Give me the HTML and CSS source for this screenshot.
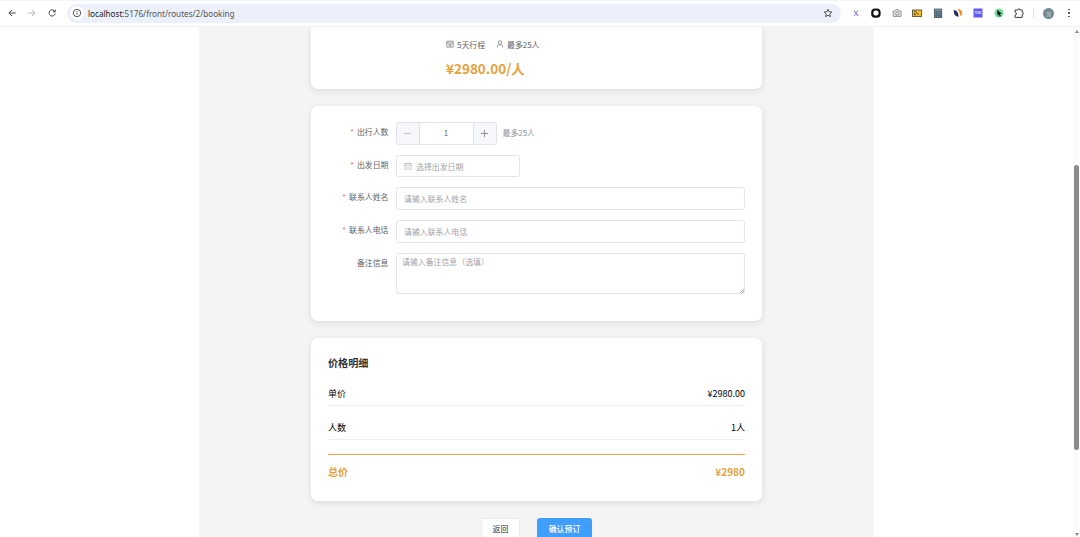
FILE: index.html
```html
<!DOCTYPE html>
<html lang="zh-CN">
<head>
<meta charset="UTF-8" />
<meta name="viewport" content="width=device-width, initial-scale=1" />
<title>预订</title>
<link rel="stylesheet" href="styles.css">
</head>
<body>

<header class="toolbar">
  <div class="nav">
    <svg class="nav-icon" viewBox="0 0 10 10"><path d="M8.7 5H2M4.9 2L1.9 5l3 3" /></svg>
    <svg class="nav-icon off" viewBox="0 0 10 10"><path d="M1.3 5H8M5.1 2l3 3-3 3" /></svg>
    <svg class="nav-icon" viewBox="0 0 10 10"><path d="M8 3.7A3.1 3.1 0 1 0 8.2 5.6M8.2 1.6v2.3H5.9" /></svg>
  </div>
  <div class="address">
    <span class="site-info">
      <svg viewBox="0 0 10 10"><circle cx="5" cy="5" r="3.7" /><path d="M5 4.6v2.2M5 2.9v.9" /></svg>
    </span>
    <span class="url"><b>localhost:</b>5176/front/routes/2/booking</span>
    <svg class="star" viewBox="0 0 10 10"><path d="M5 1.2l1.1 2.6 2.8.2-2.1 1.9.6 2.8L5 7.2 2.6 8.7l.6-2.8L1.1 4l2.8-.2z" /></svg>
  </div>
  <div class="extensions">
    <svg viewBox="0 0 12 12"><path d="M4 3.5l4 5.5" stroke="#8a7be0" stroke-width="1.1" /><path d="M8 3.5L4 9" stroke="#72a9ef" stroke-width="1.1" /><path d="M6.5 7L8 9" stroke="#e06bc0" stroke-width="1.1" /></svg>
    <svg viewBox="0 0 12 12"><rect x="1.2" y="1.4" width="9.4" height="9.4" rx="3.8" fill="#111" /><rect x="3.4" y="3.5" width="5.1" height="5.1" rx="2" fill="#fff" /></svg>
    <svg viewBox="0 0 12 12"><path d="M2.2 4h1.9l.8-1.2h2.4L8.1 4H10v5.4H2.2z" fill="#e6e6e6" stroke="#888" stroke-width=".9" /><circle cx="6.1" cy="6.6" r="1.5" fill="#fff" stroke="#777" stroke-width=".9" /></svg>
    <svg viewBox="0 0 12 12"><rect x="1.5" y="3" width="9.2" height="6.5" fill="#edbb32" stroke="#4d4328" stroke-width=".8" /><path d="M3.2 4.6h1.4l2.8 3.2M3.4 6v1.7H5" fill="none" stroke="#46391c" stroke-width=".9" /></svg>
    <svg viewBox="0 0 12 12"><rect x="2" y="1.6" width="8.1" height="9.4" fill="#4c6372" /><rect x="3" y="2.5" width="6" height="1.6" fill="#82959f" /><path d="M3 5.5h6M3 7.3h6M3 9.2h6" stroke="#81aeba" stroke-width=".8" stroke-dasharray="1 .8" /></svg>
    <svg viewBox="0 0 12 12"><path d="M1.7 3Q6.3 3.2 6.6 9.8 1.7 9.8 1.7 3z" fill="#202a62" /><path d="M5 2Q10.2 2 10.2 6.2 10 8.8 7.8 9 8.4 4.8 5 2z" fill="#f5901e" /></svg>
    <svg viewBox="0 0 12 12"><rect x="1.5" y="1.5" width="9" height="9" rx=".5" fill="#6258f5" /><text class="badge-text" x="6" y="7.2" text-anchor="middle">TEXC</text></svg>
    <svg viewBox="0 0 12 12"><circle cx="6" cy="6" r="4.5" fill="#72dc98" /><path d="M4.2 2.8l4.6 4-1.9.3 1 2-1.2.6-.9-2.1-1.3 1.2z" fill="#111" /></svg>
    <svg viewBox="0 0 12 12"><path d="M2 3h2.9q0-1.2 1.1-1.2T7.1 3h2.1v2.3q1.2 0 1.2 1.1T9.2 7.5v2.9H2V8.1q1.5 0 1.5-1.4T2 5.3z" fill="none" stroke="#3c3c3c" stroke-width="1" stroke-linejoin="round" /></svg>
  </div>
  <div class="profile">
    <span class="divider"></span>
    <span class="avatar">测</span>
    <span class="more"><i></i><i></i><i></i></span>
  </div>
</header>

<div class="viewport">
  <main class="page">
    <section class="card route">
      <div class="route-meta">
        <svg viewBox="0 0 10 10"><path d="M1 1.5h8v7.4H1zM1 3.7h8M3 5.5h4M3 7.2h4" /></svg>
        <span>5天行程</span>
        <svg class="user" viewBox="0 0 10 10"><circle cx="5" cy="3" r="2.1" /><path d="M1.7 9.4V8q0-2 2-2h2.6q2 0 2 2v1.4" /></svg>
        <span>最多25人</span>
      </div>
      <div class="route-price">¥2980.00/人</div>
    </section>

    <section class="card form">
      <div class="row">
        <label class="label required">出行人数</label>
        <div class="number">
          <button class="step minus"></button>
          <span class="count">1</span>
          <button class="step plus"></button>
        </div>
        <span class="tip">最多25人</span>
      </div>
      <div class="row">
        <label class="label required">出发日期</label>
        <div class="field date">
          <svg viewBox="0 0 10 10"><path d="M1 1.8h8v7.2H1zM1 4.2h8M3.1 .8v2M6.9 .8v2M3 6.5h4" /></svg>
          <span>选择出发日期</span>
        </div>
      </div>
      <div class="row">
        <label class="label required">联系人姓名</label>
        <input class="field" type="text" placeholder="请输入联系人姓名" />
      </div>
      <div class="row">
        <label class="label required">联系人电话</label>
        <input class="field" type="text" placeholder="请输入联系人电话" />
      </div>
      <div class="row">
        <label class="label">备注信息</label>
        <div class="remark-box">
          <textarea class="field remark" placeholder="请输入备注信息（选填）"></textarea>
          <svg class="grip" viewBox="0 0 5 5"><path d="M0 5l5-5M2.5 5L5 2.5" /></svg>
        </div>
      </div>
    </section>

    <section class="card prices">
      <h3>价格明细</h3>
      <div class="price-item"><span>单价</span><span>¥2980.00</span></div>
      <div class="price-item"><span>人数</span><span>1人</span></div>
      <div class="price-total"><span>总价</span><span>¥2980</span></div>
    </section>

    <div class="actions">
      <button class="btn">返回</button>
      <button class="btn primary">确认预订</button>
    </div>
  </main>
  <div class="scrollbar">
    <span class="arrow up"></span>
    <span class="thumb"></span>
    <span class="arrow down"></span>
  </div>
</div>

</body>
</html>
```
FILE: styles.css
```css
* {
  box-sizing: border-box;
}
body {
  margin: 0;
  height: 537px;
  overflow: hidden;
  display: flex;
  flex-direction: column;
  background: #fff;
  font-family: "Noto Sans CJK SC", sans-serif;
  font-size: 7.9px;
  color: #606266;
}
button, input, textarea {
  font-family: inherit;
  font-size: inherit;
}

/* toolbar */
.toolbar {
  flex: none;
  display: flex;
  align-items: center;
  height: 27px;
  padding-left: 7px;
  padding-bottom: 1px;
  border-bottom: 1px solid #f1f1f2;
  border-top: 1px solid #f1f5fc;
}
.nav {
  display: flex;
  gap: 10px;
  width: 60px;
}
.nav-icon {
  width: 10px;
  height: 10px;
  fill: none;
  stroke: #444;
  stroke-width: 1;
}
.nav-icon.off {
  stroke: #b5b5b5;
}
.address {
  display: flex;
  align-items: center;
  width: 774px;
  height: 19px;
  padding: 0 8px 0 3px;
  border-radius: 10px;
  background: #ebf0fa;
}
.site-info {
  display: flex;
  align-items: center;
  justify-content: center;
  width: 14px;
  height: 14px;
  border-radius: 50%;
  background: #fff;
}
.site-info svg {
  width: 10px;
  height: 10px;
  fill: none;
  stroke: #444;
  stroke-width: .9;
}
.url {
  flex: 1;
  padding-left: 4px;
  font-family: "Noto Sans", sans-serif;
  font-size: 8.13px;
  color: #555;
}
.url b {
  font-weight: normal;
  color: #222;
}
.star {
  width: 10px;
  height: 10px;
  fill: none;
  stroke: #444;
  stroke-width: .9;
}
.extensions {
  display: flex;
  gap: 8.4px;
  padding-left: 9px;
}
.extensions svg {
  width: 12px;
  height: 12px;
}
.badge-text {
  font-size: 2.8px;
  font-weight: bold;
  fill: #fff;
}
.profile {
  display: flex;
  align-items: center;
  padding-left: 8px;
}
.divider {
  width: 1px;
  height: 9px;
  background: #d5e1f8;
}
.avatar {
  width: 11px;
  height: 11px;
  margin-left: 9px;
  border-radius: 50%;
  background: #738a94;
  color: #c5d0d5;
  font-size: 5px;
  line-height: 11px;
  text-align: center;
}
.more {
  display: grid;
  gap: 2px;
  margin-left: 14px;
}
.more i {
  width: 1.5px;
  height: 1.5px;
  border-radius: 50%;
  background: #444;
}

/* page */
.viewport {
  flex: 1;
  min-height: 0;
  display: flex;
}
.page {
  width: 675px;
  margin-left: 199px;
  padding: 0 112px;
  background: #f4f4f4;
  overflow: hidden;
}
.card {
  width: 451px;
  margin-bottom: 17px;
  border-radius: 7px;
  background: #fff;
  box-shadow: 0 2px 7px rgba(0,0,0,0.1);
}
.route {
  height: 62px;
  padding: 11px 0 0 135px;
  border-radius: 0 0 7px 7px;
}
.route-meta {
  display: flex;
  align-items: center;
  height: 12px;
}
.route-meta svg {
  width: 8px;
  height: 8px;
  margin-right: 3px;
  fill: none;
  stroke: #606266;
  stroke-width: .8;
}
.route-meta .user {
  margin-left: 11px;
}
.route-price {
  margin-top: 8px;
  line-height: 20px;
  font-size: 13.5px;
  font-weight: bold;
  color: #e6a23c;
}

/* form */
.form {
  height: 215px;
  padding: 16px 17px 0;
}
.row {
  display: flex;
  margin-bottom: 10px;
}
.label {
  width: 67.5px;
  padding-right: 7px;
  line-height: 19px;
  text-align: right;
}
.required::before {
  content: "*";
  margin-right: 3px;
  color: #f56c6c;
}
.field {
  flex: 1;
  height: 22.7px;
  padding: 0 7.5px;
  border: 1px solid #e2e4ea;
  border-radius: 2.5px;
  background: #fff;
  outline: none;
}
.field::placeholder {
  color: #a0a3aa;
}
.date {
  flex: none;
  display: flex;
  align-items: center;
  width: 124px;
  color: #a0a3aa;
}
.date svg {
  width: 8px;
  height: 8px;
  margin-right: 4px;
  fill: none;
  stroke: #a8abb2;
  stroke-width: .8;
}
.remark-box {
  position: relative;
  display: flex;
  flex: 1;
}
.remark {
  height: 41px;
  padding: 2px 5.5px;
  line-height: 12px;
  resize: none;
}
.grip {
  position: absolute;
  right: 1px;
  bottom: 1px;
  width: 4px;
  height: 4px;
  stroke: #888;
  stroke-width: .9;
}
.number {
  display: flex;
  width: 101px;
  height: 22.7px;
  border: 1px solid #e2e4ea;
  border-radius: 2.5px;
  overflow: hidden;
}
.step {
  display: grid;
  place-items: center;
  width: 23px;
  padding: 0;
  border: 0;
  background: #f5f7fa;
}
.step::before, .step::after {
  grid-area: 1 / 1;
  width: 7px;
  height: 1px;
  background: #909399;
}
.step::before {
  content: "";
}
.minus {
  border-right: 1px solid #e2e4ea;
}
.minus::before {
  background: #c0c4cc;
}
.plus {
  border-left: 1px solid #e2e4ea;
}
.plus::after {
  content: "";
  transform: rotate(90deg);
}
.count {
  flex: 1;
  line-height: 20px;
  text-align: center;
}
.tip {
  margin-left: 6px;
  line-height: 22px;
  color: #909399;
}

/* prices */
.prices {
  height: 163px;
  padding: 16px 17px;
  color: #000;
}
.prices h3 {
  margin: 0 0 13px;
  font-size: 10.1px;
  line-height: 17px;
  color: #303133;
}
.price-item {
  display: flex;
  justify-content: space-between;
  height: 22px;
  margin-bottom: 12px;
  border-bottom: 1px solid #efefef;
  font-size: 9px;
  line-height: 19px;
}
.price-total {
  display: flex;
  justify-content: space-between;
  margin-top: 14px;
  padding-top: 8px;
  border-top: 1px solid #e9ab4e;
  box-shadow: 0 -1px 0 #fdf3e3;
  font-size: 10.1px;
  font-weight: bold;
  line-height: 17px;
  color: #e6a23c;
}

.actions {
  display: flex;
  gap: 17px;
  padding-left: 170px;
}
.btn {
  width: 39px;
  height: 22.5px;
  padding: 0 0 2px;
  border: 1px solid #e9eaed;
  border-radius: 2.5px;
  background: #fff;
  color: #606266;
  font-weight: 500;
}
.btn.primary {
  width: 55px;
  border-color: #409eff;
  background: #409eff;
  color: #fff;
}

/* scrollbar */
.scrollbar {
  display: flex;
  flex-direction: column;
  align-items: center;
  width: 7px;
  margin-left: auto;
  padding: 3px 0 1px;
  background: #fbfbfb;
}
.arrow {
  border: 2.5px solid transparent;
}
.up {
  border-top: 0;
  border-bottom: 3px solid #888;
}
.down {
  margin-top: auto;
  border-bottom: 0;
  border-top: 3px solid #888;
}
.thumb {
  width: 5px;
  height: 285px;
  margin-top: 132px;
  border-radius: 3px;
  background: #8b8b8b;
}
```
